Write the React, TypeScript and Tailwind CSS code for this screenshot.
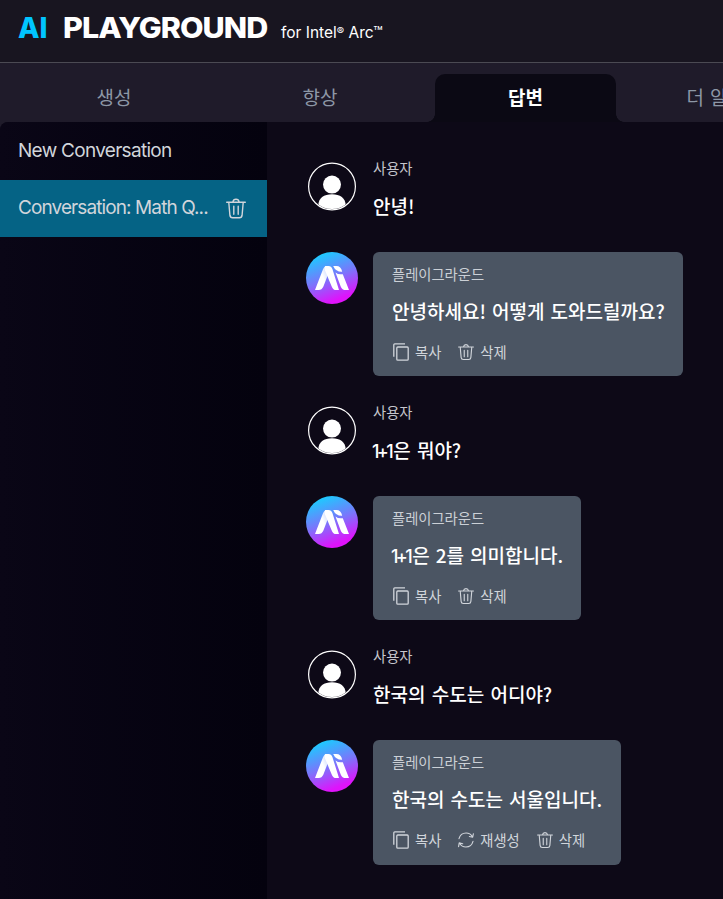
import React from "react";

const latin = "font-[Inter,'Noto_Sans_CJK_KR',sans-serif]";

function TrashIcon({ className }: { className: string }) {
  return (
    <svg viewBox="0 0 20 20" className={className} fill="none" stroke="currentColor" strokeWidth="1.4" strokeLinecap="round" strokeLinejoin="round">
      <path d="M.7 3.8H19.3M6.8 3.6C7.2 1.6 8 .8 10 .8s2.8.8 3.2 2.8M2.8 4l1.1 12.7c.2 1.8 1 2.6 2.7 2.6h6.8c1.7 0 2.5-.8 2.7-2.6L17.2 4M7.8 7.8v8M12.2 7.8v8" />
    </svg>
  );
}

function CopyIcon() {
  return (
    <svg viewBox="0 0 16 18" className="h-[18px] w-4" fill="none" stroke="currentColor" strokeWidth="1.3" strokeLinejoin="round">
      <path d="M.8 13.7V1.8q0-1 1-1H12" />
      <rect x="3.8" y="4" width="11.4" height="13.2" rx="1" />
    </svg>
  );
}

function RefreshIcon() {
  return (
    <svg viewBox="0 0 16 16" className="h-4 w-4" fill="none" stroke="currentColor" strokeWidth="1.1" strokeLinecap="round" strokeLinejoin="round">
      <path d="M1 6.7C1.9 3.2 4.8 1 8.1 1c2.8 0 5 1.4 6.3 3.7M15.4 1.7l-.7 3.5-3.4-.7M15 9.4C14.1 12.8 11.2 15 7.9 15c-2.8 0-5-1.4-6.3-3.8M.6 14.6l.6-3.7 3.5.9" />
    </svg>
  );
}

function UserAvatar() {
  return (
    <svg viewBox="0 0 48 49" className="ml-[2px] h-[49px] w-12 shrink-0">
      <clipPath id="userClip"><circle cx="24" cy="24.5" r="22.6" /></clipPath>
      <circle cx="24" cy="24.5" r="23.4" fill="none" stroke="#fff" strokeWidth="1.2" />
      <circle cx="24" cy="22.6" r="9" fill="#fff" />
      <path d="M10.3 48V43.5C10.3 36 16 32.2 24 32.2S37.7 36 37.7 43.5V48z" fill="#fff" clipPath="url(#userClip)" />
    </svg>
  );
}

function BotAvatar() {
  return (
    <svg viewBox="0 0 52 52" className="h-[52px] w-[52px] shrink-0">
      <defs>
        <linearGradient id="disc" x1=".3" y1="0" x2=".68" y2="1">
          <stop offset="0" stopColor="#16d0ff" />
          <stop offset=".5" stopColor="#7d73fb" />
          <stop offset=".9" stopColor="#df13fb" />
        </linearGradient>
        <linearGradient id="fold" x1="1" y1="0" x2="0" y2=".7">
          <stop offset="0" stopColor="#b9ccff" />
          <stop offset=".5" stopColor="#fff" />
        </linearGradient>
      </defs>
      <circle cx="26" cy="26" r="26" fill="url(#disc)" />
      <path d="M9 38 16.9 17.4Q18.2 14 21.5 14L22.8 20.5 17.4 34.5Q15.8 38 12.6 38Z" fill="url(#fold)" />
      <path d="M19.2 14h3.3q2.8 0 3.9 3L33 38H30.2q-3.2 0-4.5-3.6L18.9 18.2q-.9-2.6.3-4.2Z" fill="#fff" />
      <path d="M27.2 14h3.2q4.6 0 5.8 5.8-6.5.2-9-5.8ZM29.5 20.5q2.8 2.4 7.3 1.7L43 38h-3.2q-3.8 0-5.1-3.6Z" fill="#fff" />
    </svg>
  );
}

function Action({ icon, label }: { icon: React.ReactNode; label: string }) {
  return <button className="flex items-center gap-[6px] whitespace-nowrap">{icon}<span className="-mt-px">{label}</span></button>;
}

function Turn({ question, answer, width, regenerate = false }: { question: React.ReactNode; answer: React.ReactNode; width: string; regenerate?: boolean }) {
  return (
    <article className="h-[244.2px]">
      <div className="flex h-[90px] items-start gap-[17px]">
        <UserAvatar />
        <div className="-mt-px whitespace-nowrap">
          <div className="h-[14px] text-[14.3px] leading-[14px] text-[#c5c5cc]">사용자</div>
          <div className="mt-[17px] h-7 text-[19px] leading-7 font-medium [word-spacing:2px]">{question}</div>
        </div>
      </div>
      <div className="flex items-start gap-[15px]">
        <BotAvatar />
        <div className={`h-[124.3px] rounded-md bg-[#4b5563] pl-[19px] whitespace-nowrap ${width}`}>
          <div className="pt-[14px] text-[14.3px] leading-[15px] text-[#cbd0d6]">플레이그라운드</div>
          <div className="mt-4 h-7 text-[19px] leading-7 font-medium [word-spacing:1.8px]">{answer}</div>
          <div className="mt-[18px] flex h-[18px] items-center gap-[17px] pl-px text-[14.3px] leading-[18px] text-[#d1d5db]">
            <Action icon={<CopyIcon />} label="복사" />
            {regenerate && <Action icon={<RefreshIcon />} label="재생성" />}
            <Action icon={<TrashIcon className="h-4 w-4" />} label="삭제" />
          </div>
        </div>
      </div>
    </article>
  );
}

const Sum = () => <span className="mr-[2px] -ml-px font-[Inter,sans-serif] text-[18px] tracking-[-2.6px]">1+1</span>;

function Tab({ label, active = false }: { label: string; active?: boolean }) {
  return (
    <div className="flex w-[206px] shrink-0 justify-center">
      <div className={active
        ? "relative h-12 w-[181px] rounded-t-[10px] bg-[#0b0914] text-center text-[19px] leading-[46px] font-bold text-white before:absolute before:bottom-0 before:-left-2 before:h-2 before:w-2 before:bg-[radial-gradient(circle_at_0_0,transparent_7.5px,#0b0914_8px)] after:absolute after:-right-2 after:bottom-0 after:h-2 after:w-2 after:bg-[radial-gradient(circle_at_100%_0,transparent_7.5px,#0b0914_8px)]"
        : "h-12 pl-px text-[19px] leading-[46px] whitespace-nowrap text-[#8d97a6]"}>{label}</div>
    </div>
  );
}

export default function App() {
  return (
    <div className="flex h-[899px] w-[723px] flex-col overflow-hidden bg-[#1f1b2a] font-['Noto_Sans_CJK_KR',sans-serif] text-white">
      <header className={`flex h-[63px] shrink-0 items-start border-b border-[#4b4a53] bg-[#181520] whitespace-nowrap ${latin}`}>
        <h1 className="flex pt-3 pl-[18px] text-[28px] leading-8 font-extrabold">
          <span className="w-[45px] text-[#00c5ff]">AI</span>
          <span className="w-[218px] origin-left scale-x-[1.09] tracking-[-0.9px]">PLAYGROUND</span>
        </h1>
        <p className="pt-[21px] text-[15.5px] leading-6">for Intel<span className="relative -top-[3px] text-[11px]">®</span> Arc™</p>
      </header>
      <nav className="flex h-[59px] shrink-0 items-end pl-[10.5px]">
        <Tab label="생성" /><Tab label="향상" /><Tab label="답변" active />
        <div className="h-12 pl-[58px] text-[19px] leading-[46px] whitespace-nowrap text-[#8d97a6] [word-spacing:1.7px]">더 알아보기</div>
      </nav>
      <div className="flex min-h-0 grow rounded-tl-lg bg-[#0d0917]">
        <aside className={`w-[267px] shrink-0 rounded-tl-lg bg-linear-to-r from-[#0a0616] to-[#04020e] text-[19px] text-[#d1d5db] ${latin}`}>
          <div className="h-[58px] pl-[18px] leading-[57px] tracking-[-0.71px]">New Conversation</div>
          <div className="flex h-[57px] items-center bg-[#056385] pl-[18px]">
            <span className="w-[208px] whitespace-nowrap tracking-[-0.9px]">Conversation: Math Q...</span>
            <TrashIcon className="h-[21px] w-5" />
          </div>
        </aside>
        <main className="grow pt-10 pl-[39px]">
          <Turn question="안녕!" answer="안녕하세요! 어떻게 도와드릴까요?" width="w-[310px]" />
          <Turn question={<><Sum />은 뭐야?</>} answer={<><Sum />은 2를 의미합니다.</>} width="w-[208px]" />
          <Turn question="한국의 수도는 어디야?" answer="한국의 수도는 서울입니다." width="w-[248px]" regenerate />
        </main>
      </div>
    </div>
  );
}
